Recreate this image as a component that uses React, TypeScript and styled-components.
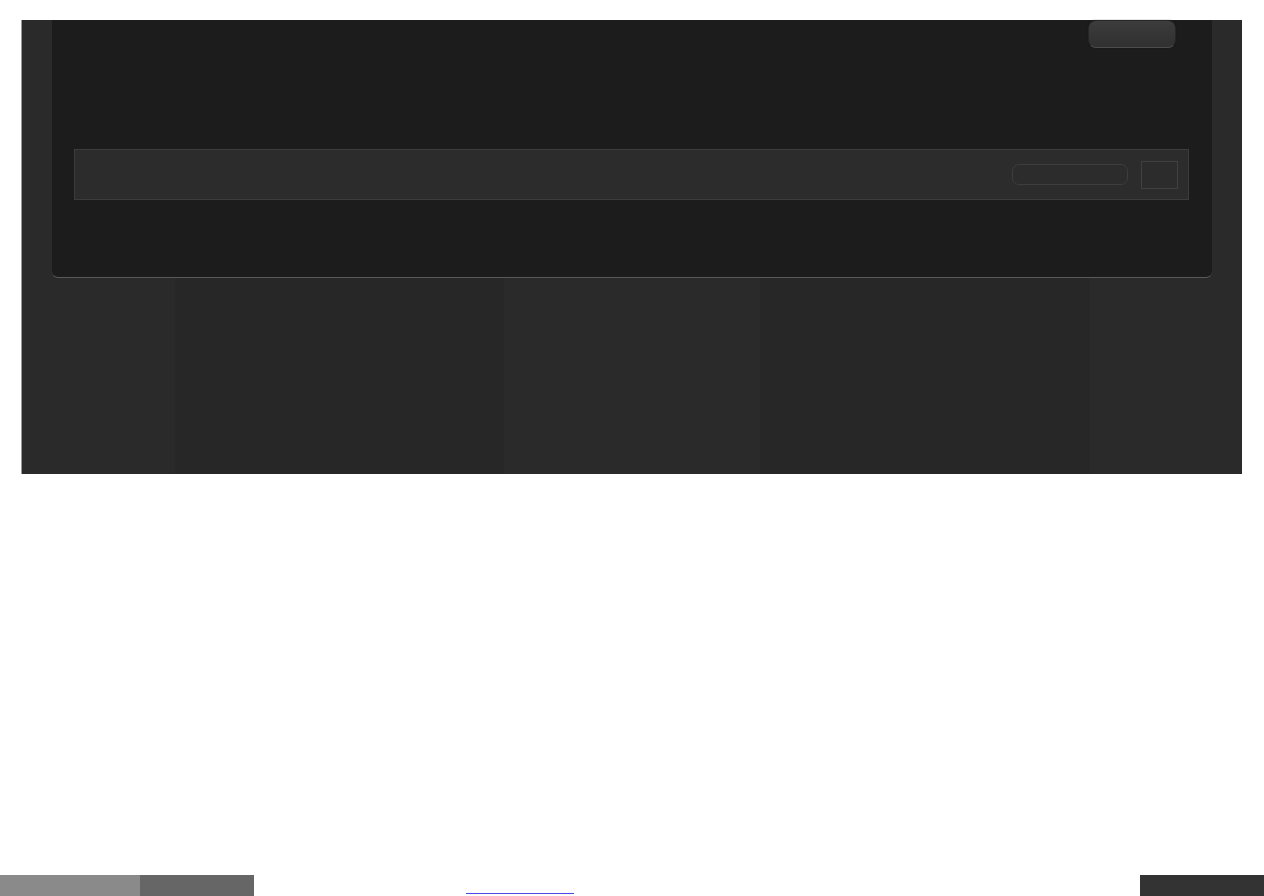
import React from 'react';
import styled, { createGlobalStyle } from 'styled-components';

const GlobalStyle = createGlobalStyle`
  html, body {
    margin: 0;
    padding: 0;
    background: #ffffff;
    font-family: 'Liberation Sans', Arial, sans-serif;
  }
`;

const columns = [153, 329, 256, 330, 152];

const App: React.FC = () => (
  <Page>
    <GlobalStyle />
    <Frame>
      <Stage>
        <Panel>
          <TopRow>
            <PillButton />
          </TopRow>
          <SearchBar>
            <SearchInput />
            <SquareButton />
          </SearchBar>
        </Panel>
      </Stage>
      <Columns>
        {columns.map((w, i) => (
          <Column key={i} $width={w} $shade={i % 2 === 1} />
        ))}
      </Columns>
    </Frame>
    <Footer>
      <Segment $width={140} $color="#8a8a8a" />
      <Segment $width={114} $color="#666666" />
      <FooterLink href="#" />
      <DarkBlock />
    </Footer>
  </Page>
);

export default App;

const Page = styled.div`
  min-height: 100vh;
  display: flex;
  flex-direction: column;
`;

const Frame = styled.div`
  margin: 20px 22px 0 21px;
  background: #2a2a2a;
  border-left: 1px solid #9a9a9a;
  display: flex;
  flex-direction: column;
`;

const Stage = styled.div`
  padding: 0 30px;
`;

const Panel = styled.div`
  height: 257px;
  background: #1c1c1c;
  border-bottom: 1px solid #5a5a5a;
  border-radius: 0 0 6px 6px;
  display: flex;
  flex-direction: column;
`;

const TopRow = styled.div`
  display: flex;
  justify-content: flex-end;
  padding-right: 36px;
  height: 129px;
`;

const PillButton = styled.div`
  width: 88px;
  height: 28px;
  box-sizing: border-box;
  border-radius: 8px;
  background: linear-gradient(#3c3c3c, #303030);
  border: 1px solid #262626;
  border-bottom-color: #4c4c4c;
  box-shadow: 0 0 1px #111111;
`;

const SearchBar = styled.div`
  margin: 0 23px 0 22px;
  height: 51px;
  box-sizing: border-box;
  background: #2c2c2c;
  border: 1px solid #3c3c3c;
  display: flex;
  align-items: center;
  justify-content: flex-end;
  gap: 13px;
  padding-right: 10px;
`;

const SearchInput = styled.div`
  width: 116px;
  height: 21px;
  box-sizing: border-box;
  border: 1px solid #3d3d3d;
  border-radius: 7px;
  background: #2c2c2c;
`;

const SquareButton = styled.div`
  width: 37px;
  height: 28px;
  box-sizing: border-box;
  border: 1px solid #404040;
  background: #2c2c2c;
`;

const Columns = styled.div`
  display: flex;
  height: 196px;
`;

const Column = styled.div<{ $width: number; $shade: boolean }>`
  width: ${(p) => p.$width}px;
  flex-shrink: 0;
  background: ${(p) => (p.$shade ? '#272727' : '#2a2a2a')};
`;

const Footer = styled.div`
  margin-top: auto;
  height: 21px;
  display: flex;
`;

const Segment = styled.div<{ $width: number; $color: string }>`
  width: ${(p) => p.$width}px;
  background: ${(p) => p.$color};
`;

const FooterLink = styled.a`
  align-self: flex-end;
  margin: 0 0 2px 212px;
  width: 108px;
  height: 0;
  border-bottom: 1px solid #4848e6;
`;

const DarkBlock = styled.div`
  margin-left: auto;
  width: 124px;
  background: #333333;
`;
